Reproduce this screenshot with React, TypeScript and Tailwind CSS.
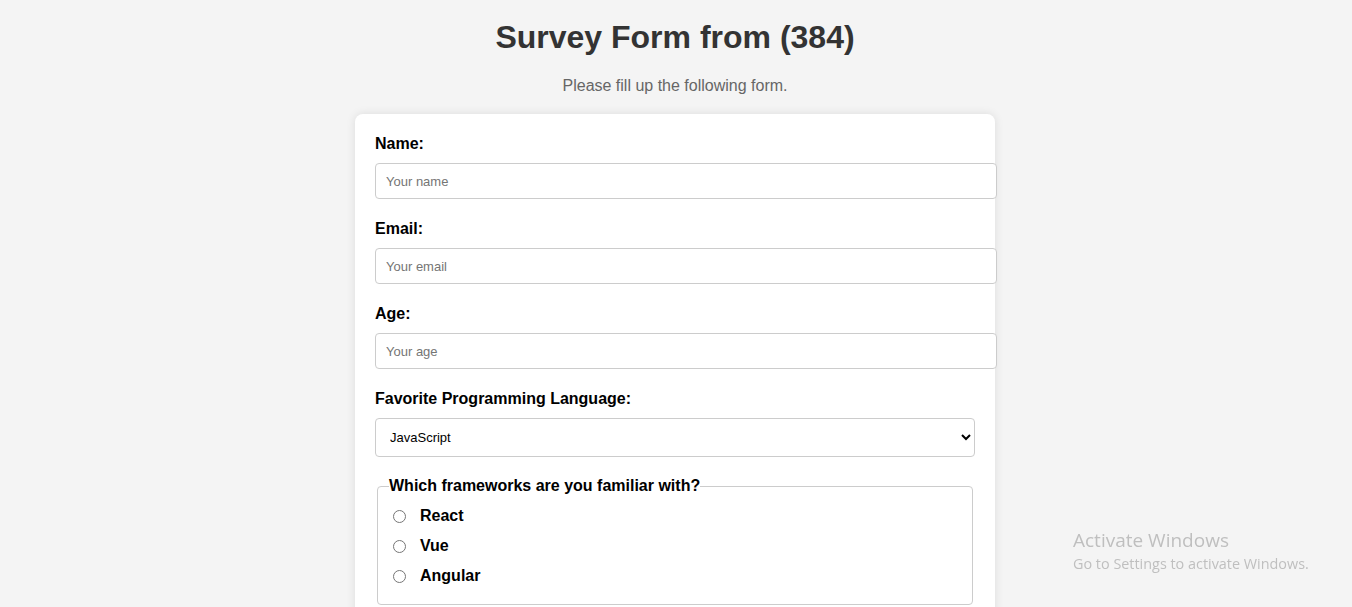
import React from 'react';

const fields = [
  { id: 'name', label: 'Name:', type: 'text', placeholder: 'Your name' },
  { id: 'email', label: 'Email:', type: 'email', placeholder: 'Your email' },
  { id: 'age', label: 'Age:', type: 'number', placeholder: 'Your age' },
];

const frameworks = ['React', 'Vue', 'Angular'];

export default function App() {
  return (
    <div className="min-h-screen bg-[#f4f4f4] pr-[2px] pt-[19px] font-['Liberation_Sans',Arial,sans-serif] text-black">
      <h1 className="text-center text-[32px] leading-[37px] font-bold text-[#333]">Survey Form from (384)</h1>
      <p className="mt-[21px] text-center text-[16px] leading-[18px] text-[#666]">Please fill up the following form.</p>

      {/* Form card */}
      <form className="mx-auto mt-[19px] w-[640px] rounded-[8px] bg-white p-[20px] shadow-[0_0_10px_rgba(0,0,0,0.1)]">
        {fields.map((f) => (
          <div key={f.id}>
            <label htmlFor={f.id} className="mb-[10px] block text-[16px] leading-[19px] font-bold">
              {f.label}
            </label>
            <input
              id={f.id}
              type={f.type}
              placeholder={f.placeholder}
              className="mb-[20px] block h-[36px] w-[622px] rounded-[4px] border border-[#ccc] bg-white px-[10px] text-[13px] placeholder:text-[#757575] focus:outline-none"
            />
          </div>
        ))}

        <label htmlFor="language" className="mb-[10px] block text-[16px] leading-[19px] font-bold">
          Favorite Programming Language:
        </label>
        <select
          id="language"
          defaultValue="JavaScript"
          className="mb-[20px] block h-[39px] w-full rounded-[4px] border border-[#ccc] bg-white px-[10px] text-[13px] text-black"
        >
          <option>JavaScript</option>
          <option>Python</option>
          <option>Java</option>
          <option>C#</option>
        </select>

        <fieldset className="mx-[2px] rounded-[4px] border border-[#ccc] px-[11px] pb-[18px]">
          <legend className="px-0 text-[16px] leading-[18px] font-bold">Which frameworks are you familiar with?</legend>
          <div className="mt-[11px] flex flex-col gap-[10px]">
            {frameworks.map((fw) => (
              <label key={fw} className="flex h-[20px] items-center text-[16px] font-bold">
                <input type="radio" name="framework" value={fw} className="ml-[4px] mr-[14px] h-[13px] w-[13px]" />
                {fw}
              </label>
            ))}
          </div>
        </fieldset>
      </form>

      {/* Windows watermark */}
      <div className="pointer-events-none fixed left-[1073px] top-[528px] font-['Open_Sans','Noto_Sans',sans-serif] text-[#bfbfbf]">
        <div className="text-[19px] leading-[25px]">Activate Windows</div>
        <div className="text-[14.4px] leading-[21px]">Go to Settings to activate Windows.</div>
      </div>
    </div>
  );
}
